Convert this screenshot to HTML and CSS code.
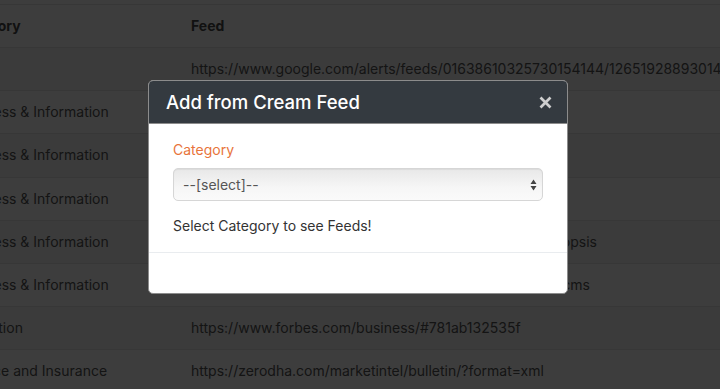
FILE: index.html
```html
<!DOCTYPE html>
<html lang="en">
<head>
  <meta charset="UTF-8">
  <meta name="viewport" content="width=device-width, initial-scale=1.0">
  <title>Feeds</title>
  <link rel="stylesheet" href="styles.css">
</head>
<body>
  <!-- таблица с фидами (под модальным окном) -->
  <div class="page">
    <table class="feeds">
      <thead>
        <tr><th class="col-cat">Category</th><th>Feed</th></tr>
      </thead>
      <tbody>
        <tr><td></td><td>https://www.google.com/alerts/feeds/01638610325730154144/12651928893014855025</td></tr>
        <tr><td>Business &amp; Information</td><td>https://www.livemint.com/rss/companies</td></tr>
        <tr><td>Business &amp; Information</td><td>https://www.livemint.com/rss/markets</td></tr>
        <tr><td>Business &amp; Information</td><td>https://feeds.feedburner.com/ndtvprofit</td></tr>
        <tr><td>Business &amp; Information</td><td>https://www.moneycontrol.com/rss/news.xml?view=synopsis</td></tr>
        <tr><td>Business &amp; Information</td><td>https://economictimes.indiatimes.com/rssfeedsindustry.cms</td></tr>
        <tr><td>Education</td><td>https://www.forbes.com/business/#781ab132535f</td></tr>
        <tr><td>Finance and Insurance</td><td>https://zerodha.com/marketintel/bulletin/?format=xml</td></tr>
      </tbody>
    </table>
  </div>

  <div class="backdrop"></div>

  <!-- модальное окно -->
  <div class="modal">
    <div class="modal-header">
      <h5 class="modal-title">Add from Cream Feed</h5>
      <button type="button" class="close-btn" aria-label="Close">
        <svg width="13" height="13" viewBox="0 0 13 13"><path d="M1.5 1.5 L11.5 11.5 M11.5 1.5 L1.5 11.5" stroke="currentColor" stroke-width="2.7"/></svg>
      </button>
    </div>
    <div class="modal-body">
      <label class="field-label" for="category">Category</label>
      <div class="select-wrap">
        <select id="category" class="category-select">
          <option>--[select]--</option>
        </select>
        <svg class="select-arrows" width="7" height="12" viewBox="0 0 7 12"><path d="M3.5 0.5 L6.5 5 L0.5 5 Z M0.5 7 L6.5 7 L3.5 11.5 Z" fill="#444"/></svg>
      </div>
      <p class="hint">Select Category to see Feeds!</p>
    </div>
    <div class="modal-footer"></div>
  </div>
</body>
</html>
```

FILE: styles.css
```css
body {
  margin: 0;
  padding: 0;
  font-family: Inter, "Liberation Sans", sans-serif;
  background-color: #fff;
  overflow: hidden;
}

.page {
  padding-top: 4px;
}

/* таблица фидов */
.feeds {
  border-collapse: collapse;
  table-layout: fixed;
  width: 1400px;
  margin-left: -55px;
  white-space: nowrap;
  font-size: 14px;
  color: #555;
}

.feeds th,
.feeds td {
  text-align: left;
  padding: 10px 12px;
  line-height: 22.15px;
  border-top: 1px solid #e6e6e6;
  overflow: visible;
}

.feeds th {
  font-weight: 700;
  color: #4a4a4a;
  border-bottom: 1px solid #e6e6e6;
}

.col-cat {
  width: 210px;
}

.feeds tbody tr:nth-child(odd) {
  background-color: #f6f6f6;
}

/* затемнение */
.backdrop {
  position: fixed;
  top: 0;
  left: 0;
  right: 0;
  bottom: 0;
  background-color: rgba(0, 0, 0, 0.76);
}

.modal {
  position: fixed;
  top: 80px;
  left: 148px;
  width: 418px;
  background-color: #fff;
  border: 1px solid #8c8c8c;
  border-radius: 5px;
  overflow: hidden;
}

.modal-header {
  display: flex;
  align-items: center;
  justify-content: space-between;
  height: 42px;
  padding: 0 15px 0 17px;
  background-color: #343a40;
  border-bottom: 1px solid #8c8c8c;
}

.modal-title {
  margin: 0;
  font-size: 18.5px;
  font-weight: 500;
  color: #fff;
}

.close-btn {
  display: flex;
  background: none;
  border: none;
  padding: 0;
  color: #cfcfcf;
  cursor: pointer;
}

.modal-body {
  padding: 16px 24px 15px;
}

.field-label {
  display: block;
  font-size: 14px;
  line-height: 20px;
  color: #e8743b;
  margin-bottom: 8px;
}

.select-wrap {
  position: relative;
  width: 370px;
}

.category-select {
  -webkit-appearance: none;
  appearance: none;
  display: block;
  width: 100%;
  height: 33px;
  padding: 0 9px;
  font-family: Inter, "Liberation Sans", sans-serif;
  font-size: 14px;
  color: #555;
  background: linear-gradient(#e8e8e8, #f6f6f6 60%, #fafafa);
  border: 1px solid #d6d6d6;
  border-radius: 5px;
  box-shadow: inset 0 1px 1px rgba(0, 0, 0, 0.06);
}

.select-arrows {
  position: absolute;
  right: 6px;
  top: 11px;
}

.hint {
  margin: 14px 0 0;
  font-size: 14px;
  line-height: 22px;
  color: #333;
}

.modal-footer {
  height: 40px;
  border-top: 1px solid #e9ecef;
}
```
